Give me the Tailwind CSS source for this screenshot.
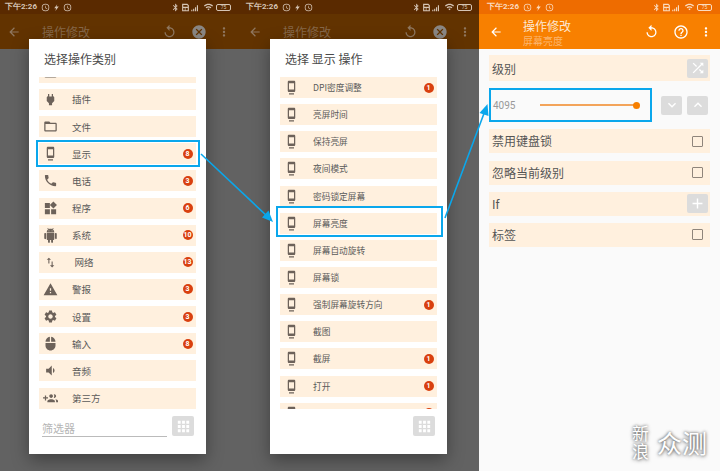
<!DOCTYPE html>
<html lang="en">
  <head>
    <meta charset="UTF-8" />
    <title>操作修改</title>
    <script src="https://cdn.jsdelivr.net/npm/@tailwindcss/browser@4"></script>
  </head>
  <body class="relative w-[720px] h-[471px] overflow-hidden bg-[#fafafa] [font-family:'Noto_Sans_CJK_SC',sans-serif]">
    <!-- Icon set -->
    <svg class="hidden">
      <symbol id="dock" viewBox="0 0 24 24"><path d="M8 23h8v-2H8v2zm8-21.99L8 1c-1.1 0-2 .9-2 2v14c0 1.1.9 2 2 2h8c1.1 0 2-.9 2-2V3c0-1.1-.9-1.99-2-1.99zM16 15H8V5h8v10z" /></symbol>
      <symbol id="plug" viewBox="0 0 24 24"><path d="M16.01 7L16 3h-2v4h-4V3H8v4h-.01C7 6.99 6 7.99 6 8.99v5.49L9.5 18v3h5v-3l3.5-3.51v-5.5c0-1-1-2-1.99-1.99z" /></symbol>
      <symbol id="folder" viewBox="0 0 24 24"><path d="M20 6h-8l-2-2H4c-1.1 0-1.99.9-1.99 2L2 18c0 1.1.9 2 2 2h16c1.1 0 2-.9 2-2V8c0-1.1-.9-2-2-2zm0 12H4V8h16v10z" /></symbol>
      <symbol id="phone" viewBox="0 0 24 24"><path d="M6.62 10.79c1.44 2.83 3.76 5.14 6.59 6.59l2.2-2.2c.27-.27.67-.36 1.02-.24 1.12.37 2.33.57 3.57.57.55 0 1 .45 1 1V20c0 .55-.45 1-1 1-9.39 0-17-7.61-17-17 0-.55.45-1 1-1h3.5c.55 0 1 .45 1 1 0 1.25.2 2.45.57 3.57.11.35.03.74-.25 1.02l-2.2 2.2z" /></symbol>
      <symbol id="widgets" viewBox="0 0 24 24"><path d="M13 13v8h8v-8h-8zM3 21h8v-8H3v8zM3 3v8h8V3H3zm13.66-2.34L11 6.34 16.66 12l5.66-5.66-5.66-5.68z" /></symbol>
      <symbol id="android" viewBox="0 0 24 24"><path d="M6 18c0 .55.45 1 1 1h1v3.5c0 .83.67 1.5 1.5 1.5s1.5-.67 1.5-1.5V19h2v3.5c0 .83.67 1.5 1.5 1.5s1.5-.67 1.5-1.5V19h1c.55 0 1-.45 1-1V8H6v10zM3.5 8C2.67 8 2 8.67 2 9.5v7c0 .83.67 1.5 1.5 1.5S5 17.33 5 16.5v-7C5 8.67 4.33 8 3.5 8zm17 0c-.83 0-1.5.67-1.5 1.5v7c0 .83.67 1.5 1.5 1.5s1.5-.67 1.5-1.5v-7c0-.83-.67-1.5-1.5-1.5zm-4.97-5.84l1.3-1.3c.2-.2.2-.51 0-.71-.2-.2-.51-.2-.71 0l-1.48 1.48C13.85 1.23 12.95 1 12 1c-.96 0-1.86.23-2.66.63L7.85.15c-.2-.2-.51-.2-.71 0-.2.2-.2.51 0 .71l1.31 1.31C6.97 3.26 6 5.01 6 7h12c0-1.99-.97-3.75-2.47-4.84zM10 5H9V4h1v1zm5 0h-1V4h1v1z" /></symbol>
      <symbol id="updown" viewBox="0 0 24 24"><path d="M9 3L5 6.99h3V14h2V6.99h3L9 3zm7 14.01V10h-2v7.01h-3L15 21l4-3.99h-3z" /></symbol>
      <symbol id="warning" viewBox="0 0 24 24"><path d="M1 21h22L12 2 1 21zm12-3h-2v-2h2v2zm0-4h-2v-4h2v4z" /></symbol>
      <symbol id="gear" viewBox="0 0 24 24"><path d="M19.14 12.94c.04-.3.06-.61.06-.94 0-.32-.02-.64-.07-.94l2.03-1.58c.18-.14.23-.41.12-.61l-1.92-3.32c-.12-.22-.37-.29-.59-.22l-2.39.96c-.5-.38-1.03-.7-1.62-.94l-.36-2.54c-.04-.24-.24-.41-.48-.41h-3.84c-.24 0-.43.17-.47.41l-.36 2.54c-.59.24-1.13.57-1.62.94l-2.39-.96c-.22-.08-.47 0-.59.22L2.74 8.87c-.12.21-.08.47.12.61l2.03 1.58c-.05.3-.09.63-.09.94s.02.64.07.94l-2.03 1.58c-.18.14-.23.41-.12.61l1.92 3.32c.12.22.37.29.59.22l2.39-.96c.5.38 1.03.7 1.62.94l.36 2.54c.05.24.24.41.48.41h3.84c.24 0 .44-.17.47-.41l.36-2.54c.59-.24 1.13-.56 1.62-.94l2.39.96c.22.08.47 0 .59-.22l1.92-3.32c.12-.22.07-.47-.12-.61l-2.01-1.58zM12 15.6c-1.98 0-3.6-1.62-3.6-3.6s1.62-3.6 3.6-3.6 3.6 1.62 3.6 3.6-1.62 3.6-3.6 3.6z" /></symbol>
      <symbol id="mouse" viewBox="0 0 24 24"><path d="M13 1.07V9h7c0-4.08-3.05-7.44-7-7.93zM4 15c0 4.42 3.58 8 8 8s8-3.58 8-8v-4H4v4zm7-13.93C7.05 1.56 4 4.92 4 9h7V1.07z" /></symbol>
      <symbol id="volume" viewBox="0 0 24 24"><path d="M18.5 12c0-1.77-1.02-3.29-2.5-4.03v8.05c1.48-.73 2.5-2.25 2.5-4.02zM5 9v6h4l5 5V4L9 9H5z" /></symbol>
      <symbol id="groupadd" viewBox="0 0 24 24"><path d="M8 10H5V7H3v3H0v2h3v3h2v-3h3v-2zm10 1c1.66 0 2.99-1.34 2.99-3S19.66 5 18 5c-.32 0-.63.05-.91.14.57.81.9 1.79.9 2.86s-.34 2.04-.9 2.86c.28.09.59.14.91.14zm-5 0c1.66 0 2.99-1.34 2.99-3S14.66 5 13 5s-3 1.34-3 3 1.34 3 3 3zm6.62 2.16c.83.73 1.38 1.66 1.38 2.84v2h3v-2c0-1.54-2.37-2.49-4.38-2.84zM13 13c-2 0-6 1-6 3v2h12v-2c0-2-4-3-6-3z" /></symbol>
      <symbol id="back" viewBox="0 0 24 24"><path d="M20 11H7.83l5.59-5.59L12 4l-8 8 8 8 1.41-1.41L7.83 13H20v-2z" /></symbol>
      <symbol id="replay" viewBox="0 0 24 24"><path d="M12 5V1L7 6l5 5V7c3.31 0 6 2.69 6 6s-2.69 6-6 6-6-2.69-6-6H4c0 4.42 3.58 8 8 8s8-3.58 8-8-3.58-8-8-8z" /></symbol>
      <symbol id="cancel" viewBox="0 0 24 24"><path d="M12 2C6.47 2 2 6.47 2 12s4.47 10 10 10 10-4.47 10-10S17.53 2 12 2zm5 13.59L15.59 17 12 13.41 8.41 17 7 15.59 10.59 12 7 8.41 8.41 7 12 10.59 15.59 7 17 8.41 13.41 12 17 15.59z" /></symbol>
      <symbol id="help" viewBox="0 0 24 24"><path d="M11 18h2v-2h-2v2zm1-16C6.48 2 2 6.48 2 12s4.48 10 10 10 10-4.48 10-10S17.52 2 12 2zm0 18c-4.41 0-8-3.59-8-8s3.59-8 8-8 8 3.59 8 8-3.59 8-8 8zm0-14c-2.21 0-4 1.79-4 4h2c0-1.1.9-2 2-2s2 .9 2 2c0 2-3 1.75-3 5h2c0-2.25 3-2.5 3-5 0-2.21-1.79-4-4-4z" /></symbol>
      <symbol id="more" viewBox="0 0 24 24"><path d="M12 8c1.1 0 2-.9 2-2s-.9-2-2-2-2 .9-2 2 .9 2 2 2zm0 2c-1.1 0-2 .9-2 2s.9 2 2 2 2-.9 2-2-.9-2-2-2zm0 6c-1.1 0-2 .9-2 2s.9 2 2 2 2-.9 2-2-.9-2-2-2z" /></symbol>
      <symbol id="shuffle" viewBox="0 0 24 24"><path d="M10.59 9.17L5.41 4 4 5.41l5.17 5.17 1.42-1.41zM14.5 4l2.04 2.04L4 18.59 5.41 20 17.96 7.46 20 9.5V4h-5.5zm.33 9.41l-1.41 1.41 3.13 3.13L14.5 20H20v-5.5l-2.04 2.04-3.13-3.13z" /></symbol>
      <symbol id="grid" viewBox="0 0 24 24"><path d="M4 8h4V4H4v4zm6 12h4v-4h-4v4zm-6 0h4v-4H4v4zm0-6h4v-4H4v4zm6 0h4v-4h-4v4zm6-10v4h4V4h-4zm-6 4h4V4h-4v4zm6 6h4v-4h-4v4zm0 6h4v-4h-4v4z" /></symbol>
      <symbol id="chevdown" viewBox="0 0 24 24"><path d="M16.59 8.59L12 13.17 7.41 8.59 6 10l6 6 6-6z" /></symbol>
      <symbol id="chevup" viewBox="0 0 24 24"><path d="M12 8l-6 6 1.41 1.41L12 10.83l4.59 4.58L18 14z" /></symbol>
      <symbol id="plus" viewBox="0 0 24 24"><path d="M19 13h-6v6h-2v-6H5v-2h6V5h2v6h6v2z" /></symbol>
      <symbol id="clock" viewBox="0 0 24 24"><path d="M12 2a10 10 0 1 0 0 20 10 10 0 0 0 0-20zm0 18a8 8 0 1 1 0-16 8 8 0 0 1 0 16zm.5-13H11v6l5 3 .8-1.2-4.3-2.6z" /></symbol>
      <symbol id="flash" viewBox="0 0 24 24"><path d="M14 3l-8 11h5l-2 7 9-12h-6z" /></symbol>
      <symbol id="bluetooth" viewBox="0 0 24 24"><path d="M17.71 7.71L12 2h-1v7.59L6.41 5 5 6.41 10.59 12 5 17.59 6.41 19 11 14.41V22h1l5.71-5.71-4.3-4.29 4.3-4.29zM13 5.83l1.88 1.88L13 9.59V5.83zm1.88 10.46L13 18.17v-3.76l1.88 1.88z" /></symbol>
      <symbol id="sim" viewBox="0 0 24 24"><path d="M3 2h14l4 4v16H3V2zm3 3v5h12V7l-2-2H6zm0 8v6h4v-6H6zm6 0v6h6v-6h-6z" /></symbol>
      <symbol id="signal" viewBox="0 0 24 24"><path d="M2 18h3v4H2zM7 15h3v7H7zM12 11h3v11h-3zM17 6h3v16h-3z" /></symbol>
      <symbol id="wifi" viewBox="0 0 24 24"><path d="M1 9l2 2c4.97-4.97 13.03-4.97 18 0l2-2C16.93 2.93 7.08 2.93 1 9zm8 8l3 3 3-3c-1.65-1.66-4.34-1.66-6 0zm-4-4l2 2c2.76-2.76 7.24-2.76 10 0l2-2C15.14 9.14 8.87 9.14 5 13z" /></symbol>
    </svg>

    <div class="flex h-full">
      <!-- Screen 1 -->
      <section class="relative w-[241px] shrink-0 h-full flex flex-col bg-[#626262] overflow-hidden">
        <div class="h-[14px] flex items-center pl-[5px] pr-[10px] bg-[#5a2a00] text-[#d6c5b5] fill-[#d6c5b5] text-[8px] font-bold [font-family:Roboto,sans-serif]">
          <span class="whitespace-nowrap">下午2:26</span>
          <svg class="w-[9px] h-[9px] ml-[4px]"><use href="#clock" /></svg>
          <svg class="w-[9px] h-[9px] ml-[2px]"><use href="#flash" /></svg>
          <svg class="w-[9px] h-[9px] ml-[2px]"><use href="#clock" /></svg>
          <svg class="w-[9px] h-[9px] ml-auto"><use href="#bluetooth" /></svg>
          <svg class="w-[9px] h-[9px] ml-[1px]"><use href="#sim" /></svg>
          <svg class="w-[10px] h-[9px]"><use href="#signal" /></svg>
          <svg class="w-[11px] h-[10px] ml-[3px]"><use href="#wifi" /></svg>
          <span class="w-[15px] h-[7px] ml-[2px] rounded-[2px] border border-[#d6c5b5] flex items-center justify-center text-[5px] leading-none font-normal">75</span>
        </div>
        <div class="h-[35px] flex items-center bg-[#623300]">
          <svg class="w-[14px] h-[14px] ml-[7px] fill-[#8f775f]"><use href="#back" /></svg>
          <span class="ml-[21px] text-[12px] text-[#85674a] whitespace-nowrap">操作修改</span>
          <svg class="w-[15px] h-[15px] ml-auto fill-[#8f775f]"><use href="#replay" /></svg>
          <svg class="w-[16px] h-[16px] ml-[14px] fill-[#8a8784]"><use href="#cancel" /></svg>
          <svg class="w-[14px] h-[14px] ml-[10px] mr-[10px] fill-[#8f775f]"><use href="#more" /></svg>
        </div>

        <div class="absolute left-[29px] top-[39px] w-[177px] h-[415px] bg-white flex flex-col shadow-[0_6px_16px_rgba(0,0,0,0.35)]">
          <h2 class="h-[38px] pl-[15px] pt-[11px] text-[12px] leading-[18px] text-[#4a4a4a] font-normal">选择操作类别</h2>
          <div class="h-[332px] overflow-hidden px-[10px]">
            <div class="flex flex-col gap-[6.15px] -mt-[15.15px] text-[9.5px] text-[#5a5a5a]">
              <div class="relative h-[21px] shrink-0 flex items-center bg-[#fff0de]">
                <svg class="w-[15px] h-[15px] ml-[3.5px] fill-[#6d625a]"><use href="#folder" /></svg>
                <span class="ml-[14.5px]">媒体</span>
              </div>
              <div class="relative h-[21px] shrink-0 flex items-center bg-[#fff0de]">
                <svg class="w-[15px] h-[15px] ml-[3.5px] fill-[#6d625a]"><use href="#plug" /></svg>
                <span class="ml-[14.5px]">插件</span>
              </div>
              <div class="relative h-[21px] shrink-0 flex items-center bg-[#fff0de]">
                <svg class="w-[15px] h-[15px] ml-[3.5px] fill-[#6d625a]"><use href="#folder" /></svg>
                <span class="ml-[14.5px]">文件</span>
              </div>
              <div class="relative h-[21px] shrink-0 flex items-center bg-[#fff0de]">
                <svg class="w-[15px] h-[15px] ml-[3.5px] fill-[#6d625a]"><use href="#dock" /></svg>
                <span class="ml-[14.5px]">显示</span>
                <span class="ml-auto mr-[3.5px] w-[10px] h-[10px] rounded-full bg-[#d9400f] text-white text-[7px] leading-[10px] text-center font-bold [font-family:Roboto,sans-serif]">8</span>
                <span class="absolute -left-[3px] -right-[3.5px] -top-[3px] -bottom-[3px] border-2 border-[#0aa7ec]"></span>
              </div>
              <div class="relative h-[21px] shrink-0 flex items-center bg-[#fff0de]">
                <svg class="w-[15px] h-[15px] ml-[3.5px] fill-[#6d625a]"><use href="#phone" /></svg>
                <span class="ml-[14.5px]">电话</span>
                <span class="ml-auto mr-[3.5px] w-[10px] h-[10px] rounded-full bg-[#d9400f] text-white text-[7px] leading-[10px] text-center font-bold [font-family:Roboto,sans-serif]">3</span>
              </div>
              <div class="relative h-[21px] shrink-0 flex items-center bg-[#fff0de]">
                <svg class="w-[15px] h-[15px] ml-[3.5px] fill-[#6d625a]"><use href="#widgets" /></svg>
                <span class="ml-[14.5px]">程序</span>
                <span class="ml-auto mr-[3.5px] w-[10px] h-[10px] rounded-full bg-[#d9400f] text-white text-[7px] leading-[10px] text-center font-bold [font-family:Roboto,sans-serif]">6</span>
              </div>
              <div class="relative h-[21px] shrink-0 flex items-center bg-[#fff0de]">
                <svg class="w-[15px] h-[15px] ml-[3.5px] fill-[#6d625a]"><use href="#android" /></svg>
                <span class="ml-[14.5px]">系统</span>
                <span class="ml-auto mr-[3.5px] w-[10px] h-[10px] rounded-full bg-[#d9400f] text-white text-[7px] leading-[10px] text-center font-bold [font-family:Roboto,sans-serif]">10</span>
              </div>
              <div class="relative h-[21px] shrink-0 flex items-center bg-[#fff0de]">
                <svg class="w-[13px] h-[13px] mx-[4.5px] fill-[#6d625a]"><use href="#updown" /></svg>
                <span class="ml-[13.5px]">网络</span>
                <span class="ml-auto mr-[3.5px] w-[10px] h-[10px] rounded-full bg-[#d9400f] text-white text-[7px] leading-[10px] text-center font-bold [font-family:Roboto,sans-serif]">13</span>
              </div>
              <div class="relative h-[21px] shrink-0 flex items-center bg-[#fff0de]">
                <svg class="w-[15px] h-[15px] ml-[3.5px] fill-[#6d625a]"><use href="#warning" /></svg>
                <span class="ml-[14.5px]">警报</span>
                <span class="ml-auto mr-[3.5px] w-[10px] h-[10px] rounded-full bg-[#d9400f] text-white text-[7px] leading-[10px] text-center font-bold [font-family:Roboto,sans-serif]">3</span>
              </div>
              <div class="relative h-[21px] shrink-0 flex items-center bg-[#fff0de]">
                <svg class="w-[15px] h-[15px] ml-[3.5px] fill-[#6d625a]"><use href="#gear" /></svg>
                <span class="ml-[14.5px]">设置</span>
                <span class="ml-auto mr-[3.5px] w-[10px] h-[10px] rounded-full bg-[#d9400f] text-white text-[7px] leading-[10px] text-center font-bold [font-family:Roboto,sans-serif]">3</span>
              </div>
              <div class="relative h-[21px] shrink-0 flex items-center bg-[#fff0de]">
                <svg class="w-[15px] h-[15px] ml-[3.5px] fill-[#6d625a]"><use href="#mouse" /></svg>
                <span class="ml-[14.5px]">输入</span>
                <span class="ml-auto mr-[3.5px] w-[10px] h-[10px] rounded-full bg-[#d9400f] text-white text-[7px] leading-[10px] text-center font-bold [font-family:Roboto,sans-serif]">8</span>
              </div>
              <div class="relative h-[21px] shrink-0 flex items-center bg-[#fff0de]">
                <svg class="w-[15px] h-[15px] ml-[3.5px] fill-[#6d625a]"><use href="#volume" /></svg>
                <span class="ml-[14.5px]">音频</span>
              </div>
              <div class="relative h-[21px] shrink-0 flex items-center bg-[#fff0de]">
                <svg class="w-[15px] h-[15px] ml-[3.5px] fill-[#6d625a]"><use href="#groupadd" /></svg>
                <span class="ml-[14.5px]">第三方</span>
              </div>
            </div>
          </div>
          <div class="flex items-start pt-[7px] pl-[13px]">
            <span class="w-[125px] h-[21px] pt-[5px] border-b border-[#bbbbbb] text-[11px] leading-[15px] text-[#b5b5b5]">筛选器</span>
            <span class="ml-[5px] w-[22px] h-[20px] rounded-[2px] bg-[#dcdcdc] flex items-center justify-center">
              <svg class="w-[17px] h-[17px] fill-white"><use href="#grid" /></svg>
            </span>
          </div>
        </div>
      </section>

      <!-- Screen 2 -->
      <section class="relative w-[238px] shrink-0 h-full flex flex-col bg-[#626262] overflow-hidden">
        <div class="h-[14px] flex items-center pl-[5px] pr-[7px] bg-[#5a2a00] text-[#d6c5b5] fill-[#d6c5b5] text-[8px] font-bold [font-family:Roboto,sans-serif]">
          <span class="whitespace-nowrap">下午2:26</span>
          <svg class="w-[9px] h-[9px] ml-[4px]"><use href="#clock" /></svg>
          <svg class="w-[9px] h-[9px] ml-[2px]"><use href="#flash" /></svg>
          <svg class="w-[9px] h-[9px] ml-[2px]"><use href="#clock" /></svg>
          <svg class="w-[9px] h-[9px] ml-auto"><use href="#bluetooth" /></svg>
          <svg class="w-[9px] h-[9px] ml-[1px]"><use href="#sim" /></svg>
          <svg class="w-[10px] h-[9px]"><use href="#signal" /></svg>
          <svg class="w-[11px] h-[10px] ml-[3px]"><use href="#wifi" /></svg>
          <span class="w-[15px] h-[7px] ml-[2px] rounded-[2px] border border-[#d6c5b5] flex items-center justify-center text-[5px] leading-none font-normal">75</span>
        </div>
        <div class="h-[35px] flex items-center bg-[#623300]">
          <svg class="w-[14px] h-[14px] ml-[7px] fill-[#8f775f]"><use href="#back" /></svg>
          <span class="ml-[21px] text-[12px] text-[#85674a] whitespace-nowrap">操作修改</span>
          <svg class="w-[15px] h-[15px] ml-auto fill-[#8f775f]"><use href="#replay" /></svg>
          <svg class="w-[16px] h-[16px] ml-[14px] fill-[#8a8784]"><use href="#cancel" /></svg>
          <svg class="w-[14px] h-[14px] ml-[10px] mr-[7px] fill-[#8f775f]"><use href="#more" /></svg>
        </div>

        <div class="absolute left-[29px] top-[39px] w-[177px] h-[415px] bg-white flex flex-col shadow-[0_6px_16px_rgba(0,0,0,0.35)]">
          <h2 class="h-[38px] pl-[15px] pt-[11px] text-[12px] leading-[18px] text-[#4a4a4a] font-normal">选择 显示 操作</h2>
          <div class="h-[332px] overflow-hidden px-[10px]">
            <div class="flex flex-col gap-[6.15px] text-[8.7px] text-[#5a5a5a]">
              <div class="relative h-[21px] shrink-0 flex items-center bg-[#fff0de]">
                <svg class="w-[15px] h-[15px] ml-[3.5px] fill-[#6d625a]"><use href="#dock" /></svg>
                <span class="ml-[14.5px]">DPI密度调整</span>
                <span class="ml-auto mr-[3.5px] w-[10px] h-[10px] rounded-full bg-[#d9400f] text-white text-[7px] leading-[10px] text-center font-bold [font-family:Roboto,sans-serif]">1</span>
              </div>
              <div class="relative h-[21px] shrink-0 flex items-center bg-[#fff0de]">
                <svg class="w-[15px] h-[15px] ml-[3.5px] fill-[#6d625a]"><use href="#dock" /></svg>
                <span class="ml-[14.5px]">亮屏时间</span>
              </div>
              <div class="relative h-[21px] shrink-0 flex items-center bg-[#fff0de]">
                <svg class="w-[15px] h-[15px] ml-[3.5px] fill-[#6d625a]"><use href="#dock" /></svg>
                <span class="ml-[14.5px]">保持亮屏</span>
              </div>
              <div class="relative h-[21px] shrink-0 flex items-center bg-[#fff0de]">
                <svg class="w-[15px] h-[15px] ml-[3.5px] fill-[#6d625a]"><use href="#dock" /></svg>
                <span class="ml-[14.5px]">夜间模式</span>
              </div>
              <div class="relative h-[21px] shrink-0 flex items-center bg-[#fff0de]">
                <svg class="w-[15px] h-[15px] ml-[3.5px] fill-[#6d625a]"><use href="#dock" /></svg>
                <span class="ml-[14.5px]">密码锁定屏幕</span>
              </div>
              <div class="relative h-[21px] shrink-0 flex items-center bg-[#fff0de]">
                <svg class="w-[15px] h-[15px] ml-[3.5px] fill-[#6d625a]"><use href="#dock" /></svg>
                <span class="ml-[14.5px]">屏幕亮度</span>
                <span class="absolute -left-[4px] -right-[6px] -top-[6.5px] -bottom-[3.5px] border-2 border-[#0aa7ec]"></span>
              </div>
              <div class="relative h-[21px] shrink-0 flex items-center bg-[#fff0de]">
                <svg class="w-[15px] h-[15px] ml-[3.5px] fill-[#6d625a]"><use href="#dock" /></svg>
                <span class="ml-[14.5px]">屏幕自动旋转</span>
              </div>
              <div class="relative h-[21px] shrink-0 flex items-center bg-[#fff0de]">
                <svg class="w-[15px] h-[15px] ml-[3.5px] fill-[#6d625a]"><use href="#dock" /></svg>
                <span class="ml-[14.5px]">屏幕锁</span>
              </div>
              <div class="relative h-[21px] shrink-0 flex items-center bg-[#fff0de]">
                <svg class="w-[15px] h-[15px] ml-[3.5px] fill-[#6d625a]"><use href="#dock" /></svg>
                <span class="ml-[14.5px]">强制屏幕旋转方向</span>
                <span class="ml-auto mr-[3.5px] w-[10px] h-[10px] rounded-full bg-[#d9400f] text-white text-[7px] leading-[10px] text-center font-bold [font-family:Roboto,sans-serif]">1</span>
              </div>
              <div class="relative h-[21px] shrink-0 flex items-center bg-[#fff0de]">
                <svg class="w-[15px] h-[15px] ml-[3.5px] fill-[#6d625a]"><use href="#dock" /></svg>
                <span class="ml-[14.5px]">截图</span>
              </div>
              <div class="relative h-[21px] shrink-0 flex items-center bg-[#fff0de]">
                <svg class="w-[15px] h-[15px] ml-[3.5px] fill-[#6d625a]"><use href="#dock" /></svg>
                <span class="ml-[14.5px]">截屏</span>
                <span class="ml-auto mr-[3.5px] w-[10px] h-[10px] rounded-full bg-[#d9400f] text-white text-[7px] leading-[10px] text-center font-bold [font-family:Roboto,sans-serif]">1</span>
              </div>
              <div class="relative h-[21px] shrink-0 flex items-center bg-[#fff0de]">
                <svg class="w-[15px] h-[15px] ml-[3.5px] fill-[#6d625a]"><use href="#dock" /></svg>
                <span class="ml-[14.5px]">打开</span>
                <span class="ml-auto mr-[3.5px] w-[10px] h-[10px] rounded-full bg-[#d9400f] text-white text-[7px] leading-[10px] text-center font-bold [font-family:Roboto,sans-serif]">1</span>
              </div>
              <div class="relative h-[21px] shrink-0 flex items-center bg-[#fff0de]">
                <svg class="w-[15px] h-[15px] ml-[3.5px] fill-[#6d625a]"><use href="#dock" /></svg>
                <span class="ml-[14.5px]">显示模式</span>
                <span class="ml-auto mr-[3.5px] w-[10px] h-[10px] rounded-full bg-[#d9400f] text-white text-[7px] leading-[10px] text-center font-bold [font-family:Roboto,sans-serif]">1</span>
              </div>
            </div>
          </div>
          <div class="flex justify-end pt-[7px] pr-[12px]">
            <span class="w-[22px] h-[20px] rounded-[2px] bg-[#dcdcdc] flex items-center justify-center">
              <svg class="w-[17px] h-[17px] fill-white"><use href="#grid" /></svg>
            </span>
          </div>
        </div>
      </section>

      <!-- Screen 3 -->
      <section class="flex-1 h-full flex flex-col bg-[#fafafa]">
        <div class="h-[14px] flex items-center pl-[8px] pr-[8px] bg-[#ee6c00] text-[#fbdcc0] fill-[#fbdcc0] text-[8px] font-bold [font-family:Roboto,sans-serif]">
          <span class="whitespace-nowrap">下午2:26</span>
          <svg class="w-[9px] h-[9px] ml-[4px]"><use href="#clock" /></svg>
          <svg class="w-[9px] h-[9px] ml-[2px]"><use href="#flash" /></svg>
          <svg class="w-[9px] h-[9px] ml-[2px]"><use href="#clock" /></svg>
          <svg class="w-[9px] h-[9px] ml-auto"><use href="#bluetooth" /></svg>
          <svg class="w-[9px] h-[9px] ml-[1px]"><use href="#sim" /></svg>
          <svg class="w-[10px] h-[9px]"><use href="#signal" /></svg>
          <svg class="w-[11px] h-[10px] ml-[3px]"><use href="#wifi" /></svg>
          <span class="w-[15px] h-[7px] ml-[2px] rounded-[2px] border border-[#fbdcc0] flex items-center justify-center text-[5px] leading-none font-normal">75</span>
        </div>
        <div class="h-[35px] flex items-center bg-[#f88000]">
          <svg class="w-[14px] h-[14px] ml-[10px] fill-white"><use href="#back" /></svg>
          <div class="ml-[20px] pt-[3.5px] flex flex-col">
            <span class="text-[12px] leading-[15px] text-[#fde8d4] whitespace-nowrap">操作修改</span>
            <span class="text-[10px] leading-[15px] text-[#fbb56f] whitespace-nowrap">屏幕亮度</span>
          </div>
          <svg class="w-[15px] h-[15px] ml-auto fill-white"><use href="#replay" /></svg>
          <svg class="w-[16px] h-[16px] ml-[14px] fill-white"><use href="#help" /></svg>
          <svg class="w-[14px] h-[14px] ml-[10px] mr-[7px] fill-white"><use href="#more" /></svg>
        </div>

        <div class="flex flex-col gap-[7.2px] px-[10px] pt-[6px] text-[12px] text-[#555555]">
          <div class="h-[26px] flex items-center bg-[#fff0de] pl-[3px] pr-[2px]">
            <span class="pt-[1px]">级别</span>
            <span class="ml-auto w-[21px] h-[19px] rounded-[2px] bg-[#dcdcdc] flex items-center justify-center">
              <svg class="w-[16px] h-[16px] fill-white"><use href="#shuffle" /></svg>
            </span>
          </div>
          <div class="h-[34px] flex items-center pr-[2px]">
            <div class="w-[163px] h-full border-2 border-[#0aa7ec] flex items-center pl-[2px]">
              <span class="w-[47px] text-[10px] text-[#999999] [font-family:Roboto,sans-serif]">4095</span>
              <span class="relative w-[96px] h-[1.5px] bg-[#f3a45a]">
                <span class="absolute -right-[3.5px] -top-[2.75px] w-[7px] h-[7px] rounded-full bg-[#f77f00]"></span>
              </span>
            </div>
            <span class="ml-[9px] w-[21px] h-[19px] rounded-[2px] bg-[#dcdcdc] flex items-center justify-center">
              <svg class="w-[16px] h-[16px] fill-white"><use href="#chevdown" /></svg>
            </span>
            <span class="ml-[5px] w-[21px] h-[19px] rounded-[2px] bg-[#dcdcdc] flex items-center justify-center">
              <svg class="w-[16px] h-[16px] fill-white"><use href="#chevup" /></svg>
            </span>
          </div>
          <div class="h-[24px] flex items-center bg-[#fff0de] pl-[3px] pr-[7px]">
            <span>禁用键盘锁</span>
            <span class="ml-auto w-[11px] h-[11px] rounded-[1px] border-[1.5px] border-[#8f857b]"></span>
          </div>
          <div class="h-[24px] flex items-center bg-[#fff0de] pl-[3px] pr-[7px]">
            <span>忽略当前级别</span>
            <span class="ml-auto w-[11px] h-[11px] rounded-[1px] border-[1.5px] border-[#8f857b]"></span>
          </div>
          <div class="h-[24px] flex items-center bg-[#fff0de] pl-[3px] pr-[2px]">
            <span>If</span>
            <span class="ml-auto w-[21px] h-[19px] rounded-[2px] bg-[#dcdcdc] flex items-center justify-center">
              <svg class="w-[17px] h-[17px] fill-white"><use href="#plus" /></svg>
            </span>
          </div>
          <div class="h-[24px] flex items-center bg-[#fff0de] pl-[3px] pr-[7px]">
            <span>标签</span>
            <span class="ml-auto w-[11px] h-[11px] rounded-[1px] border-[1.5px] border-[#8f857b]"></span>
          </div>
        </div>
      </section>
    </div>

    <!-- Callout arrows drawn over the screens -->
    <svg class="absolute left-0 top-0 w-[720px] h-[471px] pointer-events-none" viewBox="0 0 720 471">
      <line x1="201" y1="154" x2="268" y2="217" stroke="#0aa7ec" stroke-width="1.6" />
      <polygon points="273,222 262,217.5 268.5,210.5" fill="#0aa7ec" />
      <line x1="445" y1="218" x2="484.5" y2="112" stroke="#0aa7ec" stroke-width="1.6" />
      <polygon points="487.5,104 488.5,116 479.5,113" fill="#0aa7ec" />
    </svg>

    <!-- Watermark -->
    <div class="absolute left-[632px] top-[424px] flex items-center text-white [text-shadow:0_0_3px_rgba(0,0,0,0.6),0_1px_4px_rgba(0,0,0,0.4)]">
      <span class="w-[18px] text-[17px] leading-[18px]">新浪</span>
      <span class="ml-[7px] text-[25px] leading-[36px] whitespace-nowrap">众测</span>
    </div>
  </body>
</html>
